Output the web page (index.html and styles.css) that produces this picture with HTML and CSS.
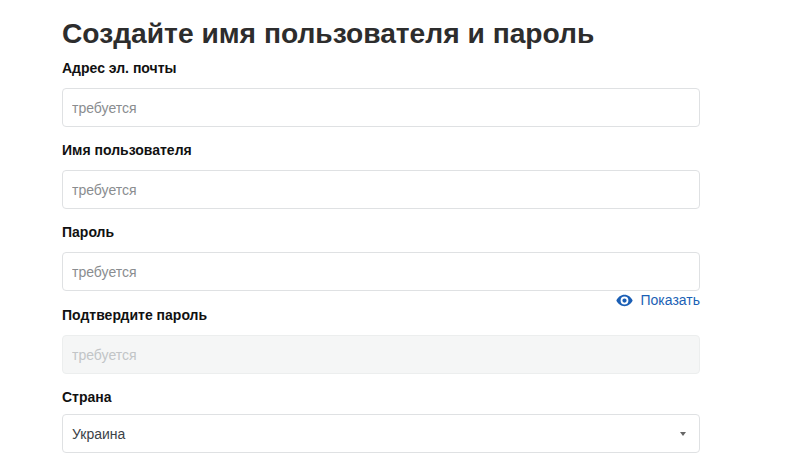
FILE: index.html
```html
<!DOCTYPE html>
<html lang="ru">
<head>
    <meta charset="UTF-8">
    <meta name="viewport" content="width=device-width, initial-scale=1.0">
    <title>Регистрация</title>
    <link rel="stylesheet" href="styles.css">
</head>
<body>
    <div class="form-container">
        <h1 class="title">Создайте имя пользователя и пароль</h1>
        <div class="field">
            <label class="field-label">Адрес эл. почты</label>
            <input class="field-input" type="text" placeholder="требуется">
        </div>
        <div class="field">
            <label class="field-label">Имя пользователя</label>
            <input class="field-input" type="text" placeholder="требуется">
        </div>
        <div class="field field-password">
            <label class="field-label">Пароль</label>
            <input class="field-input" type="text" placeholder="требуется">
            <a class="show-link" href="#">
                <svg class="show-icon" viewBox="0 0 24 24" width="17" height="17"><path fill="#1b5fb5" fill-rule="evenodd" d="M12 4C7 4 2.600 7.300 .5 12c2.100 4.700 6.500 8 11.500 8s9.400-3.300 11.500-8C21.400 7.300 17 4 12 4zm0 13.500a5.500 5.500 0 1 1 0-11 5.500 5.500 0 0 1 0 11zm0-8.500a3 3 0 1 0 0 6 3 3 0 0 0 0-6z"/></svg>
                Показать
            </a>
        </div>
        <div class="field">
            <label class="field-label">Подтвердите пароль</label>
            <input class="field-input" type="text" placeholder="требуется" disabled>
        </div>
        <div class="field">
            <label class="field-label field-label-tight">Страна</label>
            <div class="select-box">
                <span>Украина</span>
                <span class="select-arrow"></span>
            </div>
        </div>
    </div>
</body>
</html>
```

FILE: styles.css
```css
body {
    margin: 0;
    background-color: #fff;
    font-family: "Liberation Sans", Arial, sans-serif;
    overflow: hidden;
}
.form-container {
    width: 638px;
    margin-left: 62px;
    padding-top: 14px;
}
.title {
    margin: 0 0 8px;
    font-size: 28.2px;
    line-height: 38px;
    font-weight: bold;
    color: #2d2d2d;
}
.field {
    margin-bottom: 15px;
}
.field-label {
    display: block;
    height: 17px;
    margin-bottom: 11px;
    font-size: 14px;
    line-height: 17px;
    font-weight: bold;
    color: #111;
}
.field-label-tight {
    margin-bottom: 8px;
}
.field-input,
.select-box {
    display: block;
    box-sizing: border-box;
    width: 100%;
    height: 39px;
    padding: 0 9px;
    border: 1px solid #dfe1e3;
    border-radius: 4px;
    background-color: #fff;
    font-family: inherit;
    font-size: 14px;
    color: #333;
}
.field-input::placeholder {
    color: #8a8d90;
    opacity: 1;
}
.field-input:disabled {
    background-color: #f5f6f6;
    border-color: #eceeee;
}
.field-input:disabled::placeholder {
    color: #c2c5c7;
}
.field-password {
    margin-bottom: 0;
}
.show-link {
    display: flex;
    justify-content: flex-end;
    align-items: center;
    gap: 7px;
    height: 18px;
    color: #1b5fb5;
    font-size: 14px;
    text-decoration: none;
}
.field-password + .field .field-label {
    margin-top: -2px;
}
.select-box {
    display: flex;
    justify-content: space-between;
    align-items: center;
    color: #3c4248;
}
.select-arrow {
    width: 0;
    height: 0;
    margin-right: 4px;
    border-left: 3px solid transparent;
    border-right: 3px solid transparent;
    border-top: 4px solid #666;
}
```
